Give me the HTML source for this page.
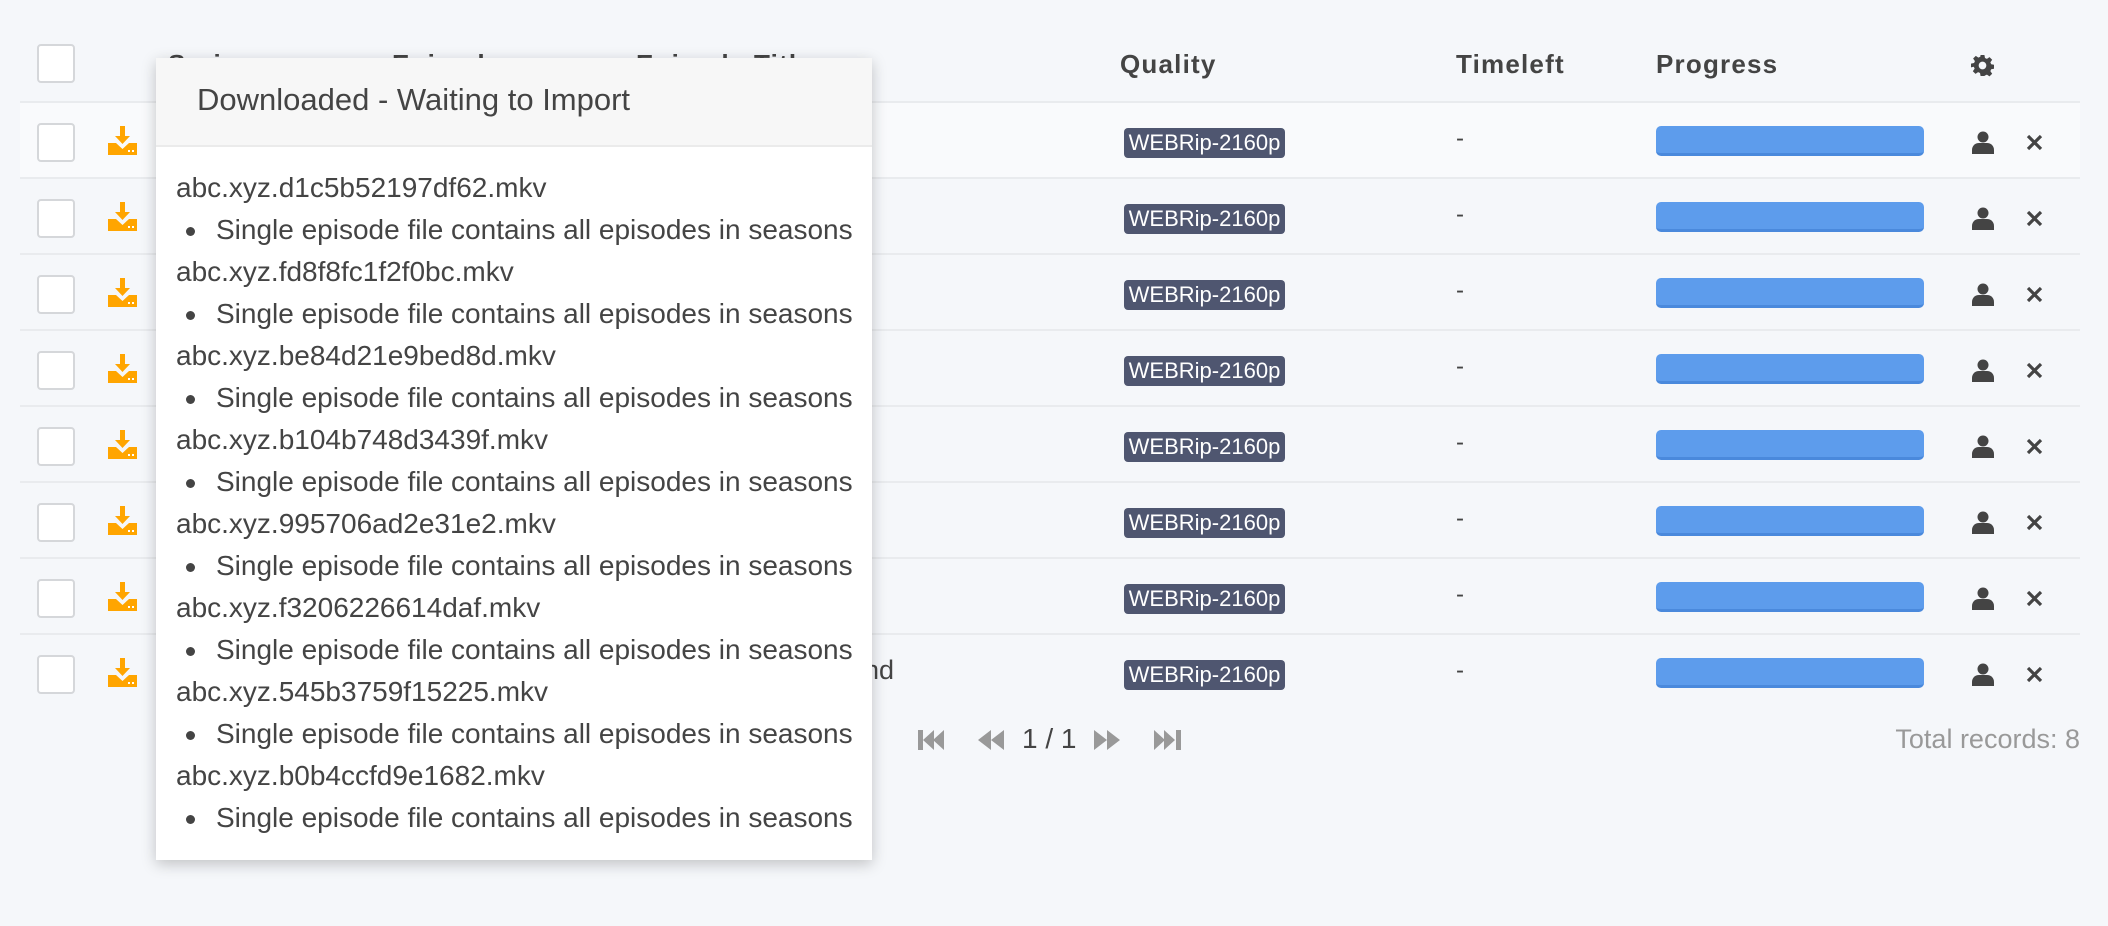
<!DOCTYPE html>
<html><head><meta charset="utf-8"><style>
*{box-sizing:border-box;margin:0;padding:0}
body{width:2108px;height:926px;background:#f5f7fa;font-family:"Liberation Sans",sans-serif;position:relative;overflow:hidden;color:#515253}
.abs{position:absolute}
.cb{position:absolute;left:37px;width:38px;height:39px;border:2px solid #d5d7da;border-radius:4px;background:#fff}
.hd{position:absolute;top:49px;font-size:26px;font-weight:bold;color:#444;letter-spacing:1.2px}
.row{position:absolute;left:20px;width:2060px;height:76px;border-bottom:2px solid #e9ebee}
.badge{position:absolute;left:1124px;width:161px;height:30px;background:#4f5670;border-radius:4px;color:#fff;font-size:22px;line-height:30px;text-align:center}
.bar{position:absolute;left:1656px;width:268px;height:30px;background:#5d9cec;border-radius:5px;border-bottom:3px solid #4a89dc}
.dash{position:absolute;left:1456px;font-size:24px;color:#444}
.pop{position:absolute;left:156px;top:58px;width:716px;height:802px;background:#fff;box-shadow:0 4px 14px rgba(0,0,0,.22)}
.pop .h{height:89px;background:#f7f7f7;border-bottom:2px solid #ebebeb;font-size:31px;color:#444;padding:24px 0 0 41px;white-space:nowrap}
.pop .b{padding:20px 0 0 20px;font-size:28px;color:#444;line-height:42px;white-space:nowrap}
.pop .li{padding-left:40px;position:relative}
.pop .li:before{content:"";position:absolute;left:10px;top:18px;width:9px;height:9px;border-radius:50%;background:#444}
.pg{position:absolute;top:730px;fill:#999}
</style></head><body>
<div class="cb" style="top:44px"></div>
<div class="hd" style="left:168px">Series</div>
<div class="hd" style="left:392px">Episode</div>
<div class="hd" style="left:636px">Episode Title</div>
<div class="hd" style="left:1120px">Quality</div>
<div class="hd" style="left:1456px">Timeleft</div>
<div class="hd" style="left:1656px">Progress</div>
<svg class="abs" style="left:1971px;top:54px" width="23" height="23" viewBox="0 0 24 24"><path fill="#444" d="M10 1h4l.6 3.2 2 .9 2.7-1.9 2.8 2.8-1.9 2.7.9 2 3.2.6v4l-3.2.6-.9 2 1.9 2.7-2.8 2.8-2.7-1.9-2 .9L14 23h-4l-.6-3.2-2-.9-2.7 1.9-2.8-2.8 1.9-2.7-.9-2L0 14v-4l3.2-.6.9-2L2.2 4.7 5 1.9l2.7 1.9 2-.9zM12 8a4 4 0 100 8 4 4 0 000-8z"/></svg>
<div class="abs" style="left:20px;top:101px;width:2060px;height:2px;background:#e9ebee"></div>
<div class="row" style="top:103px;background:#f9fafc"></div>
<div class="row" style="top:179px"></div>
<div class="row" style="top:255px"></div>
<div class="row" style="top:331px"></div>
<div class="row" style="top:407px"></div>
<div class="row" style="top:483px"></div>
<div class="row" style="top:559px"></div>
<div class="row" style="top:635px;border-bottom:none"></div>

<div id="rows"></div>
<script>
var h="";
for(var i=0;i<8;i++){var t=103+i*76;
h+='<div class="cb" style="top:'+(t+20)+'px"></div>';
h+='<svg class="abs" style="left:108px;top:'+(t+23)+'px" width="29" height="29" viewBox="0 0 29 29"><path fill="#ffa500" d="M12 0h5v10h5l-7.5 8L7 10h5z"/><path fill="#ffa500" d="M0 17h8l6.5 6 6.5-6h8v12H0z"/><rect x="20" y="24" width="2" height="2" fill="#fff"/><rect x="24" y="24" width="2" height="2" fill="#fff"/></svg>';
h+='<div class="badge" style="top:'+(t+25)+'px">WEBRip-2160p</div>';
h+='<div class="dash" style="top:'+(t+22)+'px">-</div>';
h+='<div class="bar" style="top:'+(t+23)+'px"></div>';
h+='<svg class="abs" style="left:1972px;top:'+(t+28)+'px" width="22" height="23" viewBox="0 0 22 23"><circle cx="11" cy="6" r="5.5" fill="#444"/><path fill="#444" d="M0 23v-4c0-4 3-7 7-7h8c4 0 7 3 7 7v4z"/></svg>';
h+='<svg class="abs" style="left:2026px;top:'+(t+31)+'px" width="17" height="17" viewBox="0 0 17 17"><path stroke="#444" stroke-width="3.2" d="M2 2l13 13M15 2L2 15"/></svg>';
}
document.getElementById("rows").innerHTML=h;
</script>
<div class="abs" style="left:864px;top:655px;font-size:27px;color:#444">nd</div>

<div class="pop">
<div class="h">Downloaded - Waiting to Import</div>
<div class="b">
<div>abc.xyz.d1c5b52197df62.mkv</div><div class="li">Single episode file contains all episodes in seasons</div>
<div>abc.xyz.fd8f8fc1f2f0bc.mkv</div><div class="li">Single episode file contains all episodes in seasons</div>
<div>abc.xyz.be84d21e9bed8d.mkv</div><div class="li">Single episode file contains all episodes in seasons</div>
<div>abc.xyz.b104b748d3439f.mkv</div><div class="li">Single episode file contains all episodes in seasons</div>
<div>abc.xyz.995706ad2e31e2.mkv</div><div class="li">Single episode file contains all episodes in seasons</div>
<div>abc.xyz.f3206226614daf.mkv</div><div class="li">Single episode file contains all episodes in seasons</div>
<div>abc.xyz.545b3759f15225.mkv</div><div class="li">Single episode file contains all episodes in seasons</div>
<div>abc.xyz.b0b4ccfd9e1682.mkv</div><div class="li">Single episode file contains all episodes in seasons</div>
</div></div>

<svg class="pg" style="left:918px" width="28" height="20" viewBox="0 0 28 20"><rect x="0" y="0" width="5" height="20"/><path d="M5 10L16 0v20zM15 10L26 0v20z"/></svg>
<svg class="pg" style="left:978px" width="28" height="20" viewBox="0 0 28 20"><path d="M0 10L13 0v20zM13 10L26 0v20z"/></svg>
<div class="abs" style="left:1022px;top:723px;font-size:28px;color:#444">1 / 1</div>
<svg class="pg" style="left:1094px" width="28" height="20" viewBox="0 0 28 20"><path d="M0 0l13 10L0 20zM13 0l13 10-13 10z"/></svg>
<svg class="pg" style="left:1154px" width="28" height="20" viewBox="0 0 28 20"><path d="M0 0l11 10L0 20zM10 0l11 10-11 10z"/><rect x="22" y="0" width="5" height="20"/></svg>
<div class="abs" style="right:28px;top:724px;font-size:27px;color:#999">Total records: 8</div>
</body></html>
